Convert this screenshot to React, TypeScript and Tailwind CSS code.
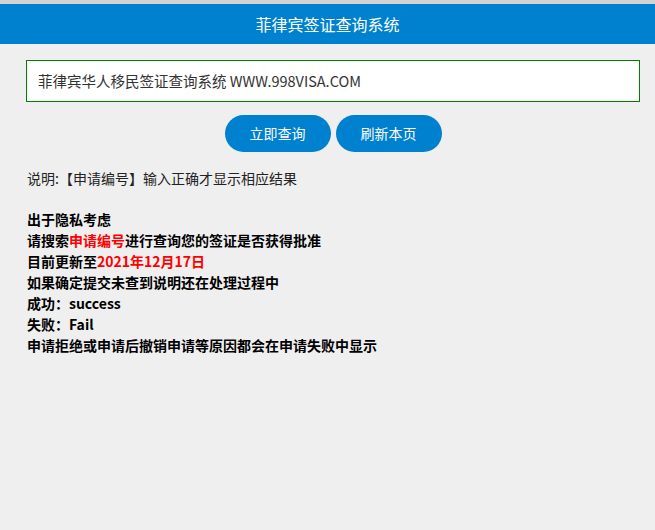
import React from 'react';

export default function App() {
  const font = { fontFamily: '"Noto Sans CJK SC", "Noto Sans", sans-serif' };
  return (
    <div className="w-[655px] h-[530px] bg-[#efefef] border-t-[4px] border-[#d3d3d3]" style={font}>
      <div className="h-[40px] bg-[#0081cf] text-white text-[16px] flex items-center justify-center">
        菲律宾签证查询系统
      </div>
      <div className="pl-[26px] pr-[15px] pt-[16px]">
        <div className="h-[42px] bg-white border-[1.5px] border-[#008000] flex items-center px-[11px] text-[14.5px] text-[#333]">
          菲律宾华人移民签证查询系统 WWW.998VISA.COM
        </div>
        <div className="flex justify-center gap-[5px] mt-[13px]">
          <button className="w-[106px] h-[37px] rounded-full bg-[#0081cf] text-white text-[14px]">立即查询</button>
          <button className="w-[106px] h-[37px] rounded-full bg-[#0081cf] text-white text-[14px]">刷新本页</button>
        </div>
        <div className="mt-[16px] text-[14px] text-[#222] pl-[1px] leading-[20px]">
          说明:【申请编号】输入正确才显示相应结果
        </div>
        <div className="mt-[21px] pl-[1px] text-[14px] font-bold text-black leading-[21px]">
          <div>出于隐私考虑</div>
          <div>请搜索<span className="text-[#ff0000]">申请编号</span>进行查询您的签证是否获得批准</div>
          <div>目前更新至<span className="text-[#ff0000]">2021年12月17日</span></div>
          <div>如果确定提交未查到说明还在处理过程中</div>
          <div>成功：success</div>
          <div>失败：Fail</div>
          <div>申请拒绝或申请后撤销申请等原因都会在申请失败中显示</div>
        </div>
      </div>
    </div>
  );
}
